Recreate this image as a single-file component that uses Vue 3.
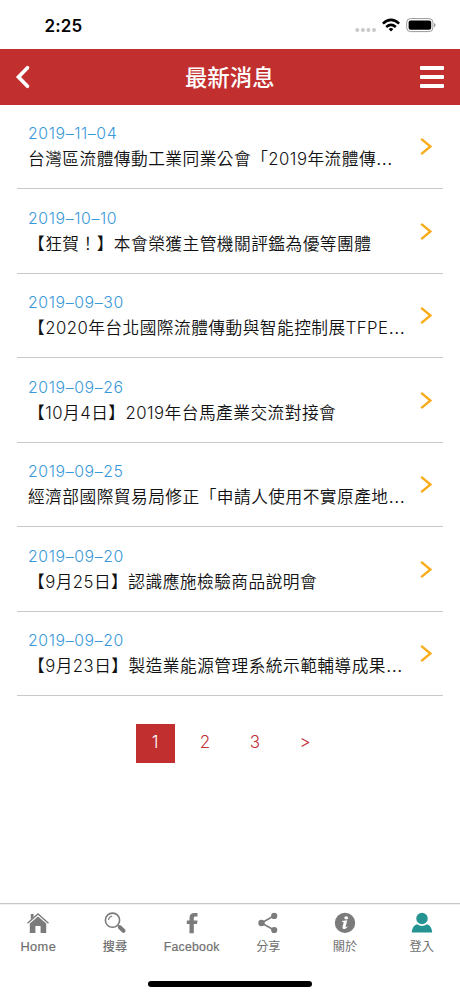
<script setup>
const news = [
  { date: '2019–11–04', title: '台灣區流體傳動工業同業公會「2019年流體傳', cut: true },
  { date: '2019–10–10', title: '【狂賀！】本會榮獲主管機關評鑑為優等團體' },
  { date: '2019–09–30', title: '【2020年台北國際流體傳動與智能控制展TFPE', cut: true },
  { date: '2019–09–26', title: '【10月4日】2019年台馬產業交流對接會' },
  { date: '2019–09–25', title: '經濟部國際貿易局修正「申請人使用不實原產地', cut: true },
  { date: '2019–09–20', title: '【9月25日】認識應施檢驗商品說明會' },
  { date: '2019–09–20', title: '【9月23日】製造業能源管理系統示範輔導成果', cut: true },
]
const pages = ['1', '2', '3', '>']
</script>

<template>
  <div class="screen">
    <div class="status">
      <span class="time">2:25</span>
      <svg class="indicators" width="90" height="20" viewBox="0 0 90 20">
        <g fill="#c9c9c9">
          <circle cx="7.3" cy="13" r="2" /><circle cx="12.9" cy="13" r="2" />
          <circle cx="18.4" cy="13" r="2" /><circle cx="24" cy="13" r="2" />
        </g>
        <g fill="none" stroke="#000" stroke-width="2.6">
          <path d="M32.9 6.6 Q41 -0.9 49.1 6.6" />
          <path d="M36.2 9.9 Q41 5.7 45.8 9.9" />
        </g>
        <path d="M38.6 12 Q41 10 43.4 12 L41 14.5 Z" fill="#000" />
        <rect x="56.7" y="1.6" width="26.2" height="13" rx="3.8" fill="none" stroke="#999" stroke-width="1" />
        <rect x="58.6" y="3.5" width="22.6" height="9.2" rx="2" fill="#000" />
        <path d="M84 6 Q85.6 6.7 85.6 8.1 Q85.6 9.6 84 10.3 Z" fill="#999" />
      </svg>
    </div>

    <header class="bar">
      <svg width="16" height="26" viewBox="0 0 16 26">
        <path d="M12.5 3.8 L3.5 13 L12.5 22.2" fill="none" stroke="#fff" stroke-width="3.7" stroke-linecap="round" />
      </svg>
      <h1>最新消息</h1>
      <div class="menu"><i /><i /><i /></div>
    </header>

    <main>
      <article v-for="(item, i) in news" :key="i" class="row">
        <div class="body">
          <time>{{ item.date }}</time>
          <p>{{ item.title }}<span v-if="item.cut" class="dots">…</span></p>
        </div>
        <svg width="14" height="20" viewBox="0 0 14 20">
          <path d="M2.2 1.9 L11.4 9.5 L2.2 17.1" fill="none" stroke="#f9ab1a" stroke-width="2.4" />
        </svg>
      </article>
    </main>

    <nav class="pager">
      <a v-for="(p, i) in pages" :key="p" :class="{ current: i === 0 }">{{ p }}</a>
    </nav>

    <footer class="tabs">
      <div class="tab">
        <svg width="24" height="24" viewBox="0 0 24 24">
          <path d="M1.5 12.2 L12 3 L22.5 12.2" fill="none" stroke="#7b7b7b" stroke-width="1.4" />
          <path d="M4.8 3 H7.6 V6 L4.8 8.5 Z M12 5.4 L20.2 12.6 V22 H14.6 V15 H9.4 V22 H3.8 V12.6 Z" fill="#7b7b7b" />
        </svg>
        <span class="latin">Home</span>
      </div>
      <div class="tab">
        <svg width="24" height="24" viewBox="0 0 24 24">
          <circle cx="9.5" cy="9.2" r="7.1" fill="none" stroke="#7b7b7b" stroke-width="1.6" />
          <path d="M5.4 9 Q6 5.7 9.2 5" fill="none" stroke="#7b7b7b" stroke-width="1.1" />
          <path d="M14.7 14.2 L16.5 16" stroke="#7b7b7b" stroke-width="1.5" />
          <path d="M16.8 16.2 L20.5 19.8" stroke="#7b7b7b" stroke-width="4" stroke-linecap="round" />
        </svg>
        <span class="bold">搜尋</span>
      </div>
      <div class="tab">
        <svg width="24" height="24" viewBox="0 0 24 24">
          <path d="M17.5 2 H14.4 C11.2 2 9.5 3.8 9.5 6.7 V9.5 H6.8 V13 H9.5 V22.3 H13.8 V13 H17 L17.5 9.5 H13.8 V7.2 C13.8 6 14.3 5.5 15.4 5.5 H17.5 Z" fill="#7b7b7b" />
        </svg>
        <span class="latin facebook">Facebook</span>
      </div>
      <div class="tab">
        <svg width="24" height="24" viewBox="0 0 24 24">
          <path d="M18 4.8 L5.5 12 L18 19" fill="none" stroke="#7b7b7b" stroke-width="1.6" />
          <g fill="#7b7b7b"><circle cx="18.2" cy="4.9" r="3.1" /><circle cx="5.5" cy="12" r="3.2" /><circle cx="18.2" cy="19" r="3.1" /></g>
        </svg>
        <span>分享</span>
      </div>
      <div class="tab">
        <svg width="24" height="24" viewBox="0 0 24 24">
          <circle cx="12" cy="11.9" r="10.2" fill="#7b7b7b" />
          <ellipse cx="13.2" cy="6.8" rx="1.9" ry="1.6" fill="#fff" />
          <path d="M9 10 L14.2 9.2 L12.6 15.8 Q12.6 16.8 14.2 15.2 L14.7 15.7 Q12.5 18.4 10.6 18.1 Q9 17.8 9.6 15.4 L10.7 11.5 Q10.8 10.8 9 10.8 Z" fill="#fff" />
        </svg>
        <span>關於</span>
      </div>
      <div class="tab">
        <svg width="24" height="24" viewBox="0 0 24 24">
          <circle cx="12" cy="7.5" r="5.7" fill="#249391" />
          <path d="M1.8 21.6 C2 17.4 3.7 14.2 7 13.2 Q12 16.6 17 13.2 C20.3 14.2 22 17.4 22.2 21.6 Z" fill="#249391" />
        </svg>
        <span>登入</span>
      </div>
    </footer>
    <div class="home-indicator"><i /></div>
  </div>
</template>

<style>
body { margin: 0; background: #fff; }
</style>

<style scoped>
.screen {
  width: 460px;
  height: 996px;
  box-sizing: border-box;
  display: flex;
  flex-direction: column;
  overflow: hidden;
  background: #fff;
  font-family: Inter, "Noto Sans CJK TC", sans-serif;
}
.status {
  height: 49px;
  flex: none;
  box-sizing: border-box;
  display: flex;
  justify-content: space-between;
  padding: 17px 20px 0 44.5px;
}
.time { font-size: 17px; line-height: 18px; font-weight: 600; letter-spacing: 0.1px; }
.bar {
  height: 55.5px;
  flex: none;
  box-sizing: border-box;
  display: flex;
  align-items: center;
  justify-content: space-between;
  padding: 0 16.5px 0 14.5px;
  background: #c22f2f;
  color: #fff;
}
h1 { margin: 2px 0 0 9px; font-size: 22.4px; line-height: 30px; font-weight: 500; letter-spacing: 0; }
.menu { width: 23.5px; display: flex; flex-direction: column; gap: 5.2px; }
.menu i { height: 4px; border-radius: 1px; background: #fff; }
main { padding: 0 17px; flex: none; }
.row {
  height: 84.5px;
  box-sizing: border-box;
  border-bottom: 1px solid #c9c9c9;
  padding: 16.5px 10px 0 11px;
  display: flex;
  justify-content: space-between;
}
.row svg { flex: none; margin-top: 16px; }
.body { width: 382px; white-space: nowrap; }
time { display: block; font-size: 15.8px; line-height: 25px; font-weight: 300; letter-spacing: 0.62px; color: #3898d8; }
p { margin: 1px 0 0; font-size: 16.7px; line-height: 25px; letter-spacing: 0.48px; font-weight: 350; color: #111; }
.dots { letter-spacing: 0; font-size: 19.5px; line-height: 1; }
.pager {
  display: flex;
  justify-content: center;
  gap: 11px;
  margin-top: 27.5px;
  flex: none;
}
.pager a {
  width: 39px;
  height: 39px;
  line-height: 37px;
  text-align: center;
  font-size: 17px;
  font-weight: 300;
  color: #c22f3a;
}
.pager .current { background: #c22f2f; color: #fff; }
.tabs {
  margin-top: auto;
  height: 57px;
  flex: none;
  display: grid;
  grid-template-columns: repeat(6, 1fr);
  border-top: 1px solid #c7c7c7;
  box-shadow: inset 0 1px #f0f0f0;
}
.tab {
  display: flex;
  flex-direction: column;
  align-items: center;
  padding-top: 7px;
  font-size: 12.2px;
  line-height: 21px;
  color: #707070;
}
.tab svg { flex: none; }
.tab span { white-space: nowrap; margin-top: 1px; }
.tab .latin { font-family: "Liberation Sans", sans-serif; font-size: 12.8px; letter-spacing: 0.4px; -webkit-text-stroke: 0.2px #707070; }
.tab .facebook { font-size: 12.3px; letter-spacing: 0.24px; line-height: 22px; }
.bold { font-weight: 500; }
.home-indicator { height: 35px; flex: none; display: flex; justify-content: center; align-items: flex-end; }
.home-indicator i { width: 164px; height: 6px; border-radius: 3px; background: #000; margin-bottom: 9px; }
</style>
